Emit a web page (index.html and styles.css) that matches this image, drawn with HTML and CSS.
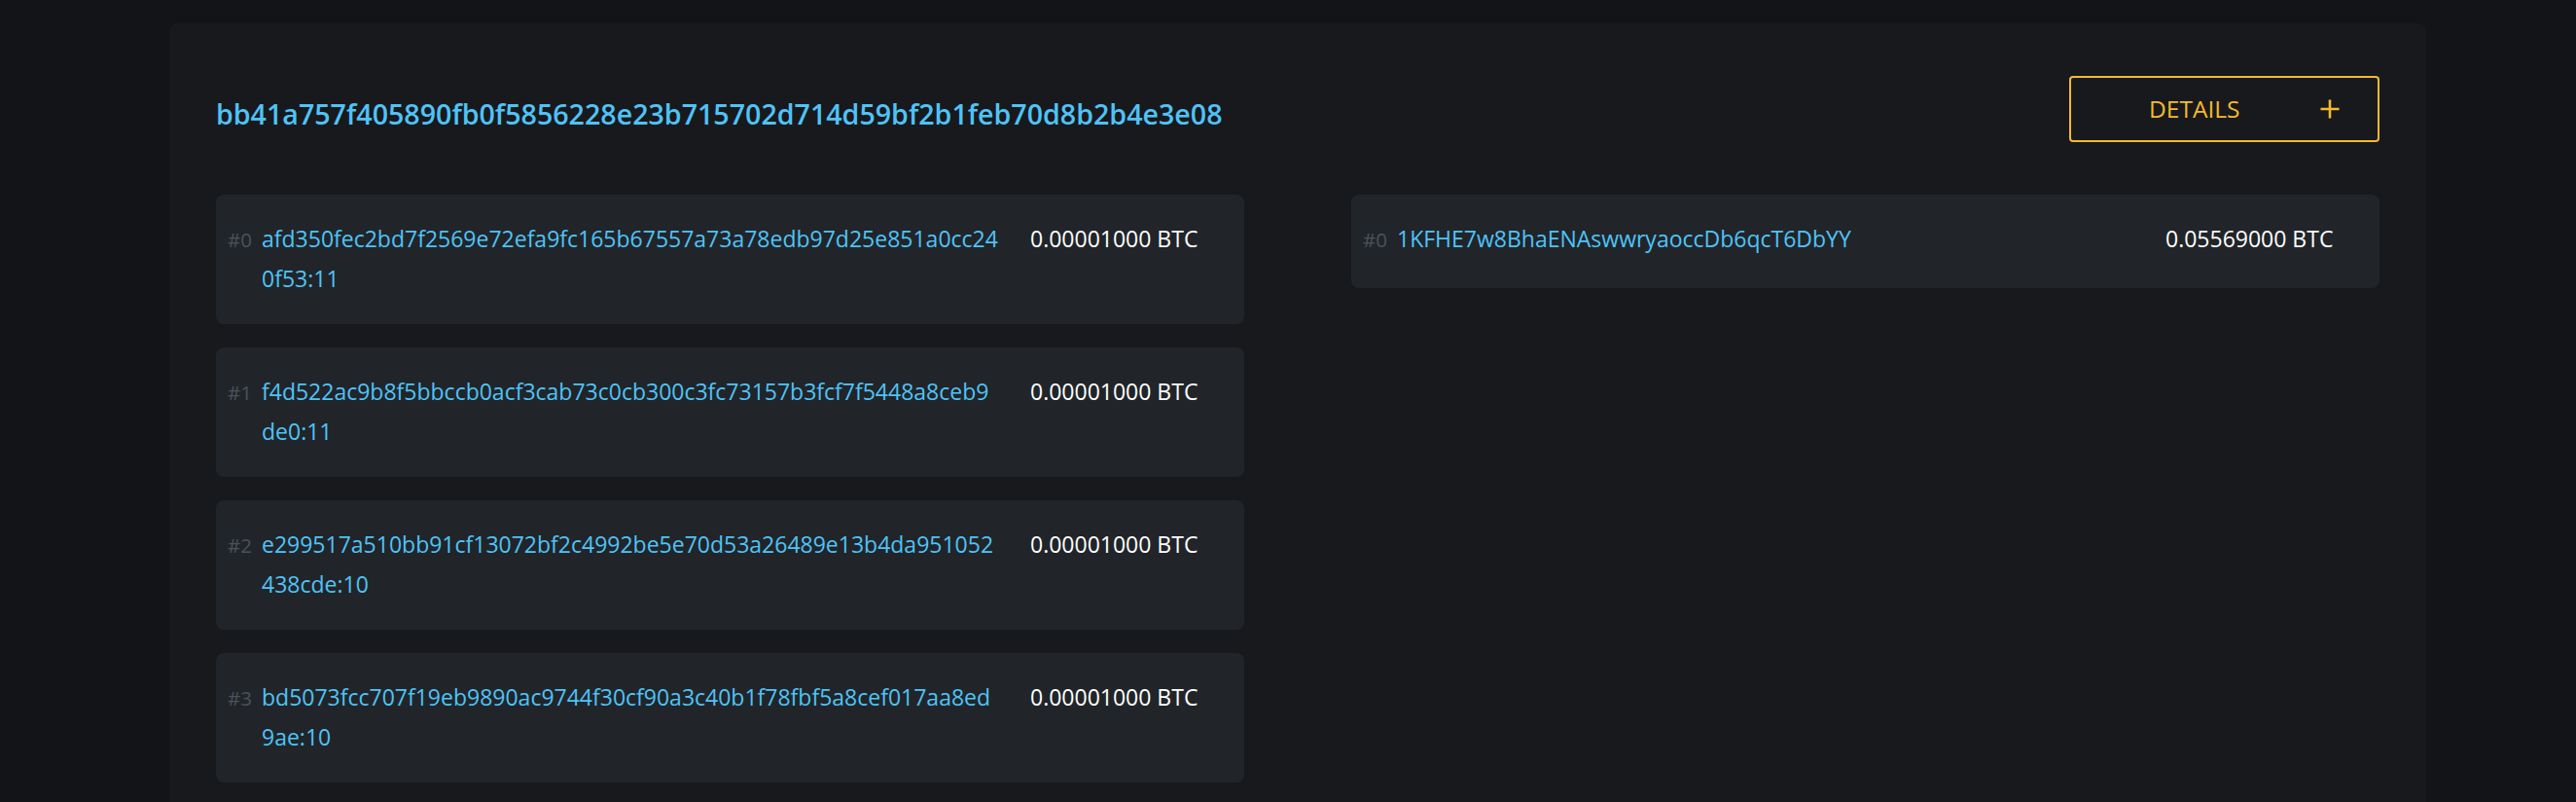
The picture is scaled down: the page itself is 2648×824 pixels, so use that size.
FILE: index.html
```html
<!DOCTYPE html>
<html lang="en">
<head>
<meta charset="utf-8">
<title>Transaction</title>
<link rel="stylesheet" href="styles.css">
</head>
<body>
<div class="page">
  <section class="tx-panel">
    <header class="tx-header">
      <h1 class="tx-hash">bb41a757f405890fb0f5856228e23b715702d714d59bf2b1feb70d8b2b4e3e08</h1>
      <button class="details-btn" type="button">
        <span class="details-label">DETAILS</span>
        <svg class="details-icon" width="22" height="22" viewBox="0 0 22 22" aria-hidden="true">
          <path d="M11 1.5V20.5M1.5 11H20.5" stroke="currentColor" stroke-width="2.6" fill="none"/>
        </svg>
      </button>
    </header>

    <div class="io-grid">
      <div class="io-col">
        <div class="io-card">
          <span class="io-index">#0</span>
          <a class="io-link" href="#">afd350fec2bd7f2569e72efa9fc165b67557a73a78edb97d25e851a0cc24<wbr>0f53:11</a>
          <span class="io-amount">0.00001000 BTC</span>
        </div>
        <div class="io-card">
          <span class="io-index">#1</span>
          <a class="io-link" href="#">f4d522ac9b8f5bbccb0acf3cab73c0cb300c3fc73157b3fcf7f5448a8ceb9<wbr>de0:11</a>
          <span class="io-amount">0.00001000 BTC</span>
        </div>
        <div class="io-card">
          <span class="io-index">#2</span>
          <a class="io-link" href="#">e299517a510bb91cf13072bf2c4992be5e70d53a26489e13b4da951052<wbr>438cde:10</a>
          <span class="io-amount">0.00001000 BTC</span>
        </div>
        <div class="io-card">
          <span class="io-index">#3</span>
          <a class="io-link" href="#">bd5073fcc707f19eb9890ac9744f30cf90a3c40b1f78fbf5a8cef017aa8ed<wbr>9ae:10</a>
          <span class="io-amount">0.00001000 BTC</span>
        </div>
      </div>
      <div class="io-col">
        <div class="io-card">
          <span class="io-index">#0</span>
          <a class="io-link" href="#">1KFHE7w8BhaENAswwryaoccDb6qcT6DbYY</a>
          <span class="io-amount">0.05569000 BTC</span>
        </div>
      </div>
    </div>
  </section>
</div>
</body>
</html>
```

FILE: styles.css
```css
html {
  overflow: hidden;
}

body {
  margin: 0;
  background: #131417;
  font-family: "Open Sans", "Noto Sans", "Liberation Sans", sans-serif;
  color: #ffffff;
}

.page {
  padding: 24px 0 0 174px;
}

.tx-panel {
  width: 2320px;
  box-sizing: border-box;
  background: #18191c;
  border-radius: 8px;
  padding: 54px 48px 48px;
}

.tx-header {
  display: flex;
  justify-content: space-between;
  align-items: flex-start;
  margin-bottom: 54px;
}

.tx-hash {
  margin: 19px 0 0;
  font-size: 28.6px;
  line-height: 39px;
  font-weight: 600;
  color: #4fc3f7;
}

.details-btn {
  width: 319px;
  height: 68px;
  box-sizing: border-box;
  display: flex;
  align-items: center;
  justify-content: space-between;
  padding: 0 38px 0 80px;
  background: transparent;
  border: 2px solid #f3ba2f;
  border-radius: 4px;
  color: #f3ba2f;
  font-family: inherit;
  font-size: 24.5px;
  line-height: 1;
  cursor: pointer;
}

.details-icon {
  display: block;
}

.io-grid {
  display: grid;
  grid-template-columns: 1fr 1fr;
  column-gap: 110px;
  align-items: start;
}

.io-col {
  display: flex;
  flex-direction: column;
  gap: 24px;
}

.io-card {
  display: grid;
  grid-template-columns: 35px 1fr 220px;
  align-items: baseline;
  min-height: 96px;
  box-sizing: border-box;
  padding: 25px 0 26px 12px;
  background: #212529;
  border-radius: 8px;
  font-size: 23px;
  line-height: 41px;
}

.io-index {
  font-size: 20.5px;
  color: #4b515b;
}

.io-link {
  color: #4fc3f7;
  text-decoration: none;
  word-break: normal;
  overflow-wrap: normal;
}

.io-amount {
  color: #ffffff;
  white-space: nowrap;
}
```
